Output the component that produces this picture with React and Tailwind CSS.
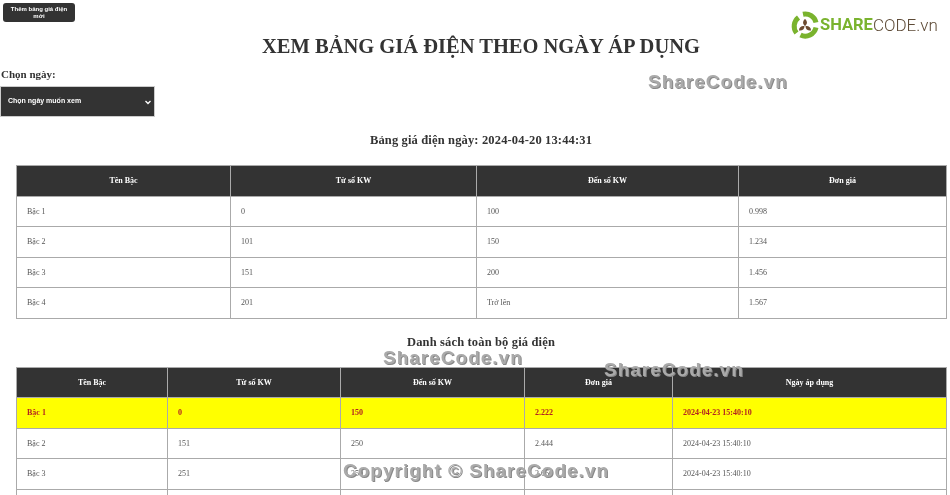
const tableOne = [
  ["Bậc 1", "0", "100", "0.998"],
  ["Bậc 2", "101", "150", "1.234"],
  ["Bậc 3", "151", "200", "1.456"],
  ["Bậc 4", "201", "Trở lên", "1.567"],
];

const tableTwo = [
  ["Bậc 1", "0", "150", "2.222", "2024-04-23 15:40:10"],
  ["Bậc 2", "151", "250", "2.444", "2024-04-23 15:40:10"],
  ["Bậc 3", "251", "350", "2.666", "2024-04-23 15:40:10"],
  ["Bậc 4", "351", "Trở lên", "2.888", "2024-04-23 15:40:10"],
];

function PriceTable({ heads, rows, widths, highlightFirst }) {
  return (
    <table className="w-[930px] ml-4 table-fixed border-collapse text-[8px] leading-[10px]">
      <colgroup>
        {widths.map((w, i) => (
          <col key={i} style={{ width: w }} />
        ))}
      </colgroup>
      <thead>
        <tr className="h-[30.5px] bg-[#333333] text-white">
          {heads.map((h) => (
            <th key={h} className="border border-[#aaaaaa] pt-px font-bold text-center">
              {h}
            </th>
          ))}
        </tr>
      </thead>
      <tbody>
        {rows.map((row, i) => {
          const active = highlightFirst && i === 0;
          return (
            <tr
              key={row[0]}
              className={active ? "h-[30.5px] bg-[#ffff00] text-[#b22222] font-bold" : "h-[30.5px] text-[#555555]"}
            >
              {row.map((cell, j) => (
                <td key={j} className="border border-[#aaaaaa] pl-[10px] pt-px">
                  {cell}
                </td>
              ))}
            </tr>
          );
        })}
      </tbody>
    </table>
  );
}

function Logo() {
  return (
    <div className="absolute left-[791px] top-[11px] flex items-center font-['Roboto',sans-serif]">
      <svg width="28" height="28" viewBox="0 0 28 28" fill="none">
        <path d="M12 3.2a11 11 0 0 1 13 8.3" stroke="#7ab32e" strokeWidth="5" />
        <path d="M25 16.5a11 11 0 0 1-15.5 7.5" stroke="#7ab32e" strokeWidth="5" />
        <path d="M5.5 22a11 11 0 0 1 2-15.5" stroke="#7ab32e" strokeWidth="5" />
        <path d="M14 8c2.6 2.2 2.6 5 0 7-2.6-2-2.6-4.800 0-7z" fill="#6b4a2f" />
        <path d="M8 19.500c0-3.500 2.500-5 5.500-4.500 0 3.500-2.500 5-5.500 4.500z" fill="#6b4a2f" />
        <path d="M20 19.500c0-3.500-2.500-5-5.500-4.500 0 3.500 2.500 5 5.500 4.500z" fill="#6b4a2f" />
      </svg>
      <span className="ml-[1px] text-[16.5px] leading-none font-bold text-[#7ab32e]">SHARE</span>
      <span className="text-[17px] leading-none font-light text-[#5d4a36]">CODE.vn</span>
    </div>
  );
}

function Watermark({ className, children }) {
  return (
    <div
      className={`absolute font-['Liberation_Sans',sans-serif] font-bold text-[19px] tracking-[1px] text-[#aaaaaa] whitespace-nowrap [text-shadow:1px_1px_0_#888888] ${className}`}
    >
      {children}
    </div>
  );
}

export default function App() {
  return (
    <div className="relative h-[495px] w-[950px] overflow-hidden bg-white font-['Liberation_Serif',serif] text-[#333333] will-change-transform">
      <div className="pl-[3px] pt-[3px]">
        <button className="block w-[72px] h-[19px] rounded-[3px] bg-[#333333] text-white text-[6px] leading-[7px] font-bold font-['Liberation_Sans',sans-serif] px-1">
          Thêm bảng giá điện mới
        </button>
      </div>

      <h1 className="mt-[12px] ml-[16px] w-[930px] text-center text-[20.5px] leading-[24px] font-bold">
        XEM BẢNG GIÁ ĐIỆN THEO NGÀY ÁP DỤNG
      </h1>

      <div className="mt-[10px] pl-[1px] text-[11px] leading-[13px] font-bold">Chọn ngày:</div>
      <div className="mt-[5px] flex h-[31px] w-[155px] items-center justify-between border border-[#cccccc] bg-[#333333] pl-[7px] pr-[2px] text-white">
        <span className="text-[7px] font-bold font-['Liberation_Sans',sans-serif]">Chọn ngày muốn xem</span>
        <svg width="8" height="8" viewBox="0 0 8 8" fill="none">
          <path d="M1.5 3l2.5 2.5L6.5 3" stroke="white" strokeWidth="1.3" />
        </svg>
      </div>

      <h3 className="mt-[15px] ml-[16px] w-[930px] text-center text-[12.5px] leading-[16px] font-bold tracking-[0.15px]">
        Bảng giá điện ngày: 2024-04-20 13:44:31
      </h3>
      <div className="mt-[17px]">
        <PriceTable
          heads={["Tên Bậc", "Từ số KW", "Đến số KW", "Đơn giá"]}
          rows={tableOne}
          widths={[214, 246, 262, 208]}
        />
      </div>

      <h3 className="mt-[15px] ml-[16px] w-[930px] text-center text-[12.5px] leading-[16px] font-bold tracking-[0.15px]">
        Danh sách toàn bộ giá điện
      </h3>
      <div className="mt-[17px]">
        <PriceTable
          heads={["Tên Bậc", "Từ số KW", "Đến số KW", "Đơn giá", "Ngày áp dụng"]}
          rows={tableTwo}
          widths={[151, 173, 184, 148, 274]}
          highlightFirst
        />
      </div>

      <Logo />
      <Watermark className="left-[648px] top-[68px]">ShareCode.vn</Watermark>
      <Watermark className="left-[383px] top-[344px]">ShareCode.vn</Watermark>
      <Watermark className="left-[604px] top-[356px]">ShareCode.vn</Watermark>
      <Watermark className="left-[343px] top-[457px]">Copyright © ShareCode.vn</Watermark>
    </div>
  );
}
